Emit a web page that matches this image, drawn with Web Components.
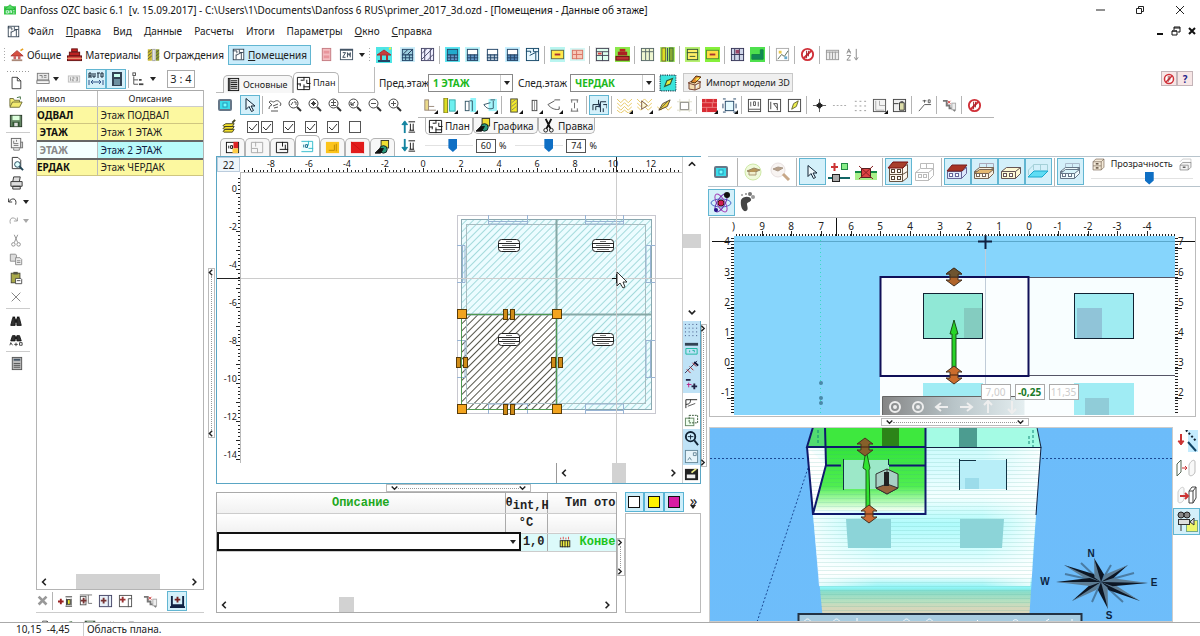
<!DOCTYPE html>
<html lang="ru">
<head>
<meta charset="utf-8">
<title>Danfoss OZC basic 6.1</title>
<style>
html,body{margin:0;height:100%;background:#fff}
body{font:10px/14px "Noto Sans","Open Sans",sans-serif;color:#222;overflow:hidden}
</style>
</head>
<body>
<app-shell></app-shell>
<script>
const BASE='*{box-sizing:border-box}button,input,select{font:inherit;color:inherit;margin:0}';
function define(name,css,html){
  customElements.define(name,class extends HTMLElement{
    constructor(){super();this.attachShadow({mode:'open'});}
    connectedCallback(){
      if(this.shadowRoot.childNodes.length)return;
      const w=this.getAttribute('w'),h=this.getAttribute('h');
      if(w)this.style.setProperty('--w',w+'px');
      if(h)this.style.setProperty('--h',h+'px');
      const t=document.createElement('template');
      t.innerHTML='<style>'+BASE+css+'</style>'+(typeof html==='function'?html(this):html);
      this.shadowRoot.append(t.content.cloneNode(true));
    }
  });
}
/* ---------- icons, 16x16 grid ---------- */
const r=(x,y,w,h,f,s)=>`<rect x="${x}" y="${y}" width="${w}" height="${h}" fill="${f||'none'}" stroke="${s||'none'}"/>`;
const p=(d,s,f,w)=>`<path d="${d}" stroke="${s||'#222'}" fill="${f||'none'}" stroke-width="${w||1}"/>`;
const lens=(inner)=>`<circle cx="6.5" cy="6.5" r="4.5" fill="#fff" stroke="#444"/>`+p('M10 10l4 4','#333','none',2)+inner;
const sheet=(bg,top,bot)=>r(0,0,16,16,bg)+r(2.5,2.5,11,6,top,'#246')+r(2.5,8.5,11,6,bot,'#246')+p('M2 11.5h12M6 8v6M10 8v6','#246');
const block=(roof,floor,wall,c)=>p('M1.5 10.5l5-4h14v6l-5 5h-14z',c,wall)+p('M1.5 10.5h14v7M15.5 10.5l5-4',c)+(roof?p('M1 10l5-6h15l-5 6z','#722',roof):'')+(floor?p('M1.5 12.5l5-4h14l-5 4z',c,floor):'')+r(3.5,12.5,3,3,'#fff',c)+r(9.5,12.5,3,3,'#fff',c);
const ban='<circle cx="8" cy="8" r="6" fill="#fff" stroke="#d03038" stroke-width="2"/>'+p('M4 12L12 4','#d03038','none',2)+p('M7 4v8M9 4v6','#a02028');
const ICONS={
 app:r(0,3,16,11,'#3cc84c')+p('M1 7l7-6 7 6z','#2a3','#5d6')+p('M3 9h3v3H3zM8 12V9h2v3M12 9h2M12 12h2','#eff'),
 rooms:r(1.5,1.5,13,13,'#fff','#234')+p('M1 3.5h5v3M9 2v3.5h5M11.5 5v9M11 6l-6 3M5 8v6','#234'),
 home:p('M1 9l7-6 7 6z','#a33','#d85040')+r(4,9,3,4,'#c66')+r(9,9,3,4,'#c66')+r(2,13,12,2,'#a87')+p('M12 3l3-2','#e6a020','none',2),
 homeC:r(0,0,16,16,'#4ee6e6')+p('M1 8l7-5 7 5z','#a33','#c83c3c')+r(4,8,2,5,'#a33')+r(10,8,2,5,'#a33')+r(2,13,12,2,'#246')+p('M13 2l2-1','#ee4','none',2),
 bricks:r(5,2,6,3,'#c22','#611')+r(2.5,5.5,11,4,'#b22','#611')+r(.5,9.5,15,5,'#c33','#611')+p('M0 12h16','#eb8'),
 walls:r(1,1,5,14,'#c9b930')+r(7,1,3,14,'#eee','#999')+r(11,1,4,14,'#8a9a30')+p('M1 5l5-4M1 9l5-4M1 13l5-4M11 5l4-3M11 9l4-3M11 13l4-3','#554'),
 door:r(3.5,1.5,9,13,'#f4bcc0','#c47a80')+r(5,4,6,3,'#e8959c')+r(5,9,6,3,'#e8959c'),
 zm:r(1.5,2.5,13,11,'#fff','#456')+r(1,2,14,2,'#456')+p('M4 6h3l-3 5h3M9 11V6l2 3 1-3v5','#345'),
 hatch1:sheet('#cdeefa','#9cd','#9cd')+p('M3 8l5-5M8 8l5-5','#235'),
 hatch2:r(1.5,1.5,13,13,'#eef','#446')+p('M2 7l5-5M2 13L13 2M8 14l6-6M5 2v12M11 2v12','#446'),
 s1:sheet('#5ee6f2','#2ac','#69c'),s2:sheet('#bdf4fa','#fff','#69c'),s3:sheet('#fff','#fff','#bcd'),s4:sheet('#c8f0ff','#fff','#58b'),
 s5:r(1.5,1.5,13,13,'#e9f8ff','#146')+p('M1 4.5h5v2M9 2v3h5M11.5 5v9M11 6l-6 3','#146'),
 y1:r(0,0,16,16,'#b9f5f0')+r(1.5,3.5,13,9,'#ffe94a','#664')+p('M5 8h6','#a33','none',2),
 y2:r(0,1,16,14,'#d5f6f4')+r(2.5,3.5,11,9,'#f7c8b8','#d87060')+p('M3 8h10M7 4v9','#d87060'),
 t1:r(0,0,16,16,'#eee')+r(1.5,1.5,13,13,'#dfe','#445')+p('M1 5h14M1 9h14M8 5v10','#445')+r(3,6,4,2,'#d44'),
 t2:r(0,0,16,16,'#8be84a')+r(5,2,6,3,'#b22')+r(3,5,10,4,'#a22')+r(1,10,14,4,'#b33','#611'),
 t3:r(1.5,1.5,13,13,'#eef6d0','#566')+p('M6 2v12M10 2v12M2 5h12','#566'),
 t4:r(0,0,16,16,'#b6f070')+r(2,1,4,14,'#dd2','#663')+r(10,1,4,14,'#8a3','#363')+p('M8 1v14','#346'),
 t5:r(0,0,16,16,'#b6f070')+r(2.5,2.5,11,11,'#fe6','#353')+p('M2 6h12M5 10h6','#353'),
 t6:r(0,0,16,16,'#86f03a')+r(1.5,3.5,13,9,'#fd4','#583')+p('M5 8h6','#a33','none',2),
 t7:r(1.5,1.5,13,13,'#cfd6e8','#335')+p('M1 8h14M5 2v12M10 2v12','#335')+r(6,3,4,4,'#946'),
 t8:r(0,0,16,16,'#4ee04e')+p('M2 13h12V3h-3v5H2z','#184','#185'),
 t9:r(1.5,1.5,13,13,'#fff','#aaa')+p('M3 13l4-5 3 2 4-6','#565')+r(4,4,3,3,'#e9c84a')+r(10,10,3,3,'#6ac'),
 ban:ban,grid:r(1.5,3.5,13,10,'#eee','#999')+p('M1 5.5h14M5 5v8M8 5v8M11 5v8','#999'),
 az:p('M2 7l2-5 2 5M3 5h3M2 9h4l-4 5h4M12 2v11M10 11l2 3 2-3','#888'),
 doc:p('M3.5 1.5h6l4 4v9h-10zM9.5 1.5v4h4','#333','#fff'),
 open:p('M1 13V4h4l1 2h6v2M1 14l3-6h11l-3 6z','#663','#f2ea70')+p('M9 3l4-1v3','#363'),
 save:r(1.5,1.5,13,13,'#686','#232')+r(4,2,8,5,'#dfd')+r(4,9,8,5,'#353')+r(6,10,4,4,'#ddd'),
 plot:r(2.5,1.5,10,10,'#f4f4f4','#666')+p('M5 4v3h5M5 9h5M8 3v2','#777')+r(12.5,5.5,2,6,'#ddd','#777')+p('M5 12v2h6v-2','#777'),
 prev:p('M3.5 1.5h6l3 3v9h-9z','#333','#fff')+'<circle cx="9" cy="9" r="3" fill="#dff" stroke="#245"/>'+p('M11 11l4 4','#245','none',2),
 print:p('M4 7l1-5h7l-1 5M2 7h12v5H2zM4 12h8v3H4z','#333','#ddd'),
 undo:p('M3 4v4h4M3 8c4-6 10-4 8 3','#222','none',1),redo:p('M13 4v4H9M13 8c-4-6-10-4-8 3','#999'),
 cut:p('M10 2L6 11M6 2l4 9','#888')+'<circle cx="5" cy="13" r="2" stroke="#888" fill="none"/><circle cx="11" cy="13" r="2" stroke="#888" fill="none"/>',
 copy:p('M1.5 2.5h6l1 1v7h-7z','#888','#ddd')+p('M7.5 6.5h5l2 2v6h-7zM9 10h4M9 12h4','#888','#eee'),
 paste:r(2.5,2.5,10,11,'#a8a848','#443')+r(5,1,5,3,'#554')+p('M7.5 8.5h6l1 1v5h-7z','#444','#fff')+p('M9 11h4','#444'),
 del:p('M3 3l10 10M13 3L3 13','#777','none',1),
 find:p('M2 13l2-8h3v8zM9 13V5h3l2 8z','#111','#333')+r(7,6,2,4,'#111')+r(4,3,3,2,'#111')+r(9,3,3,2,'#111'),
 find2:p('M2 9l2-6h3v6zM9 9V3h3l2 6z','#111','#333')+r(7,4,2,3,'#111')+p('M1 14l1-3 2 3M6 13h4M8 11v4M12 11h3v3h-3z','#333'),
 calc:r(3.5,1.5,10,13,'#bbb','#555')+r(5,3,7,2,'#456')+p('M5 8h7M5 10h7M5 12h7','#555','none',1),
 lst:r(1.5,1.5,13,11,'#e8e8e8','#777')+p('M1 9h14M4 4h3v3M9 4h3M9 6h3','#777')+r(1,10,14,3,'#fff','#777'),
 num:r(1.5,4.5,13,7,'#eee','#bbb')+p('M4 6v4M6 6h2v2H6v2h2M10 6h2v4h-2M10 8h2','#999'),
 auto:p('M1 7V2h2v5M1 5h2M5 2v4h2V2M9 2h3M10 2v5M13 2h2v4h-2z','#123')+p('M1 9v5M15 9v5M3 11h10M5 9l-2 2 2 2M11 9l2 2-2 2','#358'),
 calc2:r(4,1,10,14,'#345')+r(6,3,6,3,'#cfe')+p('M6 9h6M6 11h6M6 13h6','#ade'),
 tree:r(1,1,3,3,'#fff','#444')+p('M2 5v9h5M2 9h5','#444')+r(8,8,3,2,'#444')+r(8,13,5,2,'#444'),
 list:r(2.5,1.5,11,13,'#ddd','#111')+p('M5 4h7M5 6h7M5 8h7M5 10h7M5 12h7M4 2v12','#111'),
 plan:p('M1.5 1.5h13v13h-13z','#111','#fff')+p('M1 8.5h4M8.5 1v4M8.5 9v6M8 11.5h7M4.5 8v3M11.5 4v4h4M5 4.5h3','#111'),
 scr:'<rect x="1" y="2" width="14" height="12" rx="2" fill="#678"/><rect x="3" y="4" width="10" height="8" fill="#3bdcea"/>'+r(6,6,4,4,'#7ff','#29b'),
 ptr:p('M4 1.5v11l3-3 2.5 5 2-1-2.5-4.5h4z','#123','#eef8fc'),
 hand:p('M2 12c0-3 2-4 3-4l-3-3c2-2 3 0 5 0 2-2 5-2 7 2l-1 2M6 9l5-2M7 11l4-1M4 14h7','#555'),
 z1:lens(p('M4 8l2-3M7 5h2v3','#555')),z2:lens(p('M4 6.5h5M6.5 4v5','#333','none',1)+p('M5 5l3 3M8 5L5 8','#555')),z3:lens(p('M4 5.5h5M6.5 3v5M4 8.5h5','#555')),z4:lens(p('M4 5v3h3M4 8l4-3','#333')),z5:lens(p('M4 6.5h5','#555')),z6:lens(p('M4 6.5h5M6.5 4v5','#555')),
 w1:r(3,2,4,11,'#ead98a','#987')+p('M7 13h8M7 9h6','#987'),
 w2:r(2,0,4,16,'#dd2','#772')+r(8,2,6,12,'#6ef0f0','#3aa'),
 w3:r(9,0,6,15,'#8ff4fa')+r(3.5,3.5,4,10,'#fff','#356')+p('M8 3h3v11','#356'),
 w4:r(7,1,9,13,'#a4f4fa')+p('M2 7c3 5 7 5 10 4V3M9 2h5M9 5L2 7','#356'),
 w5:r(4,1,7,14,'#f4ea2a','#443')+p('M5 5l5-4M5 9l5-4M5 13l5-4','#886'),
 w6:r(5.5,2.5,5,11,'#fff','#444')+p('M8 3v10','#999'),w7:p('M1 7c3 4 8 6 12 5V9M8 2h6M8 3L1 7','#555'),
 w8:p('M4 2h8M5 2v3M11 2v3M4 14h8M5 11v3M11 11v3M8 5v6','#666'),
 w9:p('M1 13V7h6V2M4 13h0V9h5V4h6M9 9v6M12 7h4v4M12 11v4','#123','none',1)+r(7,6,2,4,'#235'),
 h1:p('M0 5l4 4 4-4 4 4 4-4M0 1l4 4 4-4 4 4 4-4M0 9l4 4 4-4 4 4 4-4M0 13l4 3 4-3 4 3 4-3','#e6c660','none',1),
 h2:p('M0 5l4 4 4-4 4 4 4-4M0 1l4 4 4-4 4 4 4-4M0 9l4 4 4-4 4 4 4-4','#e6c660','none',1)+p('M5 3v9l6-4z','#754','#fff8d0'),
 h3:p('M0 9l4 4 4-4 4 4 4-4','#e6c660')+p('M2 13l4-7 8-4-3 7-9 4','#543','#f0d040')+p('M4 11l8-8','#565'),
 h4:r(3.5,4.5,9,8,'#fff','#555')+p('M0 4h16M0 13h16M3 1v14M13 1v14','#ddc'),
 b1:r(0,1,16,14,'#d82c34')+p('M0 5h16M0 10h16M4 1v4M11 5v5M5 10v5M12 1v4','#ec8080'),
 b2:r(3.5,3.5,9,10,'#e6fbff','#246')+p('M1 1h3M12 1h3M1 15h3M12 15h3M1 6v5M15 6v5','#246'),
 m1:r(1.5,1.5,13,13,'#fff','#444')+p('M4 4v5M7 4h2v4H7zM12 4v5M2 12h12','#555'),
 m2:r(1.5,1.5,13,13,'#fff','#444')+p('M4 4v8M7 6h4v7M7 6l4 5','#444'),
 m3:r(1.5,1.5,13,13,'#fff','#444')+p('M5 12l2-6 5-3-2 6z','#663','#eef04a'),
 plus:p('M8 1v14M1 8h14','#555')+p('M8 5v6M5 8h6','#222','none',3),
 dash:p('M1 8h14','#aaa').replace('/>',' stroke-dasharray="2 2"/>'),
 dots:[3,8,13].map(a=>[3,8,13].map(b=>r(a,b,2,1,'#999')).join('')).join(''),
 k1:r(1.5,1.5,13,13,'#f4f4f4','#555')+p('M4 3v10h9M8 3v5h6','#aaa'),k2:r(1.5,1.5,13,13,'#eee','#444')+p('M8 5h5v8H8zM9 4h3M2 6h5','#333','#dda'),
 k3:p('M2 14l6-7h7M8 2v3M6 3h4M12 2h2v3h-2z','#555'),k4:p('M1 3h4v5h3v3h3l3 3','#777','none',2)+p('M6 3l3 3M9 3l-3 3','#c33')+r(10.5,5.5,4,7,'#eee','#aaa'),
 layers:p('M1 13l3-2h9l-2 3H2zM1 10l3-2h9l-2 3H2zM1 7l3-2h9l-2 3H2z','#442','#f4e02a')+p('M11 4l3-3','#442','none',2),
 up:p('M4 15V3','#1484a0','none',2)+p('M1 6l3-4 3 4z','#1484a0','#1484a0')+p('M8 3h7M8 14h7M10 5v7M13 5v7M9 12h5','#111','#ec8'),
 down:p('M4 1v11','#1484a0','none',2)+p('M1 10l3 4 3-4z','#1484a0','#1484a0')+p('M8 3h7M8 14h7M10 5v7M13 5v7M9 12h5','#111','#ec8'),
 gfx:r(6.5,.5,8,8,'#eede30','#332')+'<circle cx="9" cy="10" r="4" fill="#2a9a7c" stroke="#122"/>'+p('M0 14l5-5h4l-3 5z','#111','#111'),
 sc:p('M5 1l5 10M11 1L6 11','#111','none',2)+'<circle cx="5" cy="13" r="2" fill="none" stroke="#111"/><circle cx="11" cy="13" r="2" fill="none" stroke="#111"/>',
 p1:r(1.5,2.5,13,11,'#fff','#111')+r(9,2,5,7,'#d22')+r(8,9,6,5,'#fc4')+p('M4 6v3M6 6h2v3H6z','#111'),
 p2:p('M1.5 2.5h12v11h-12zM6 2v5M2 9h6v5','#aaa'),p3:p('M1.5 2.5h12v11h-12zM8 2v5M5 10h9M11 5v5','#111','none',1),
 p4:p('M1.5 2.5h12v11h-12M9 2v5M9 10h5','#3bc','#eff')+p('M4 6v3M6 6h2v3H6z','#168'),
 p5:r(1,2,14,12,'#fcc41c')+p('M4 11h6V5M12 4v8','#b80'),p6:r(1,2,14,12,'#e21c1c')+p('M1 2l14 12','#c11'),
 imp:p('M1 8l6-3 7 2-6 3zM2 9v5l6 1v-5M8 15l5-2V8','#743','#f4dcb0')+p('M4 7l5-6 5 1-6 6z','#531','#e08a30')+p('M9 5l3-2','#f8ea50','none',2),
 pat:r(1,1,14,14,'#3ae4dc','#134').replace('/>',' stroke-dasharray="1 1" stroke-width="1"/>')+p('M5 11l2-5 5-2-2 5z','#353','#e8ee40'),
 help:'<text x="8" y="13" text-anchor="middle" font-size="13" font-weight="700" fill="#22228a" font-family="Noto Sans">?</text>',
 x2:p('M3 3l9 9M12 3l-9 9','#999','none',3),
 f1:p('M0 8h6M3 5v6','#922','none',2)+p('M8 3h7M8 13h7M9 5v7M14 5v7','#333','#ee5')+r(10,6,3,5,'#ee3','#333'),
 f2:r(2.5,2.5,6,9,'#fff','#555')+p('M3 7h6M6 4v6','#733','none',2)+p('M11 1v9h4M2 1h13','#777'),
 f3:r(1.5,1.5,13,12,'#e8f0f8','#446')+p('M3 7h6M6 4v6','#733','none',2)+p('M11 2v11','#446'),
 f4:r(1.5,1.5,13,12,'#fff','#555')+p('M2 6h6M5 3v6','#933','none',2)+p('M11 5v9M11 5h4','#555'),
 f5:p('M2 2v10h12V2M5 12v3M11 12v3M0 14h16','#124','none',2)+p('M5 6h6M8 3v6','#722','none',2),
 n1:[2,6,10,14].map(a=>[2,6,10,14].map(b=>r(a-1,b-1,1,1,'#347')).join('')).join(''),
 n2:r(1,2,14,3,'#345')+p('M2 8h12v6H2zM6 10v2M9 10h2v2','#1cb8a0'),
 n3:p('M1 15L14 2','#335')+p('M3 11l4 4M6 8l4 4M9 4l4 4','#a22','none',1)+p('M11 3l4 4','#113','none',2),
 n4:p('M2 3h5M8 10h6M11 7v6','#224','none',2)+p('M3 8h5M5 6v5','#b28'),n5:p('M2 14V5h12M2 10c4 0 5-2 5-5','#222','none',1)+p('M4 12l8-3','#555'),
 n6:r(1.5,5.5,9,8,'#efe','#686')+r(5.5,2.5,9,8,'none','#353').replace('/>',' stroke-dasharray="2 1"/>'),
 n7:'<circle cx="7" cy="6" r="5" fill="#cef" stroke="#123" stroke-width="2"/>'+p('M11 10l4 5','#123','none',2)+p('M4 6h6M7 4v5','#123'),
 n8:r(1.5,1.5,13,13,'#e6f4fa','#689')+p('M4 12l2-3 2 3M10 4h3v3h-3z','#689'),
 n9:r(1,2,14,12,'#222')+r(3,8,9,4,'#eee')+p('M8 6l5-4','#ee8','none',2),
 conv:p('M3 5V3M6 5V2M9 5V3M12 5V2','#d44')+r(2.5,6.5,11,7,'#ee4','#222')+p('M5 6v8M8 6v8M11 6v8','#222')
};
const BIG={
 cap:'<circle cx="11" cy="11" r="8" fill="#effada" stroke="#cfe8a8"/>'+p('M5 10l7-3 6 2-7 3z','#986','#b89858')+p('M7 11v3h7v-3','#a97','#eec'),
 zoomc:'<circle cx="9" cy="9" r="7" fill="#f8f4f2" stroke="#e8e0e0"/>'+p('M4 8l5-2 5 1-5 3z','#a98','#b8a088')+p('M14 13l6 6','#c8a888','none',3),
 add:p('M3 6h7M6.5 2v8','#c33','none',2)+r(13.5,2.5,6,6,'#8e8','#284')+p('M0 17h22','#166','none',2)+r(4.5,13.5,7,7,'#aaa','#222'),
 rem:r(0,11,22,8,'#a8f088')+p('M0 11h22','#184','none',2)+r(6.5,7.5,9,9,'#d44','#522')+p('M4 5l14 13M18 5L4 18','#822'),
 hr:p('M2.500 6.500h13v14h-13zM15.500 6.500l5-3v13l-5 4'.replace(/\.500/g,'.5'),'#654','#fdf6ec')+p('M2 13.5h13.5l5-3','#654')+p('M1 7l5-6h15l-5 6z','#711','#a8402c')+r(4.5,8.5,3,3,'#fff','#543')+r(10.5,8.5,3,3,'#fff','#543')+r(4.5,15.5,3,3,'#fff','#543')+r(10.5,15.5,3,3,'#fff','#543'),
 hg:p('M1.5 11.5l5-4h13v7l-5 5h-13zM1.5 11.5h13v8M14.5 11.5l5-4M6.5 7V2.5h13v5M12.5 2v5','#bbb','none')+r(4.5,13.5,3,3,'#fff','#bbb')+r(9.5,13.5,3,3,'#fff','#bbb'),
 h5:block('#a83424','','#dce8fc','#669'),h6:p('M6.5 7V2.5h14v5M13.5 2v5','#aab')+block('','#e4b870','#f8f0e0','#765'),h7:block('','','#fdf8d4','#655'),
 h8:p('M6.5 9V3.5h14v6M13.5 3v6M1.5 14v-5l5-5','#a4d0d8')+p('M1 16l6-6h14l-6 6z','#18a8cc','#5fdcf4'),
 h9:p('M6.5 7V2.5h14v5M13.5 2v5','#abc')+block('','#d8f4fa','#eefafc','#678'),
 cab:p('M3 7l4-4h12v12l-4 4H3z','#765','#f4ead8')+p('M3 7h12v12M15 7l4-4M3 13h12','#765')+r(7,9,4,2,'#543')+r(7,15,4,2,'#543'),
 cab2:p('M7 3h12v6M3 7l4-4','#bbb')+p('M3 12l4-4h12v7l-4 4H3zM3 12h12v7','#777','#f4f4f4')+r(7,14,4,2,'#555'),
 atom:'<ellipse cx="11" cy="12" rx="10" ry="4" fill="none" stroke="#4a6ac8"/><ellipse cx="11" cy="12" rx="10" ry="4" transform="rotate(60 11 12)" fill="none" stroke="#a238b4" stroke-width="1"/><ellipse cx="11" cy="12" rx="10" ry="4" transform="rotate(120 11 12)" fill="none" stroke="#6a2aa8"/><circle cx="11" cy="12" r="3" fill="#d21c50" stroke="#411"/><circle cx="17" cy="4" r="3" fill="#111"/><circle cx="6" cy="19" r="2" fill="#218"/>',
 foot:'<path d="M4 9c2-4 9-4 10-1s-4 3-4 5 2 6-1 7-6-4-5-11z" fill="#444"/><circle cx="5" cy="4" r="1" fill="#999"/><circle cx="9" cy="3" r="1" fill="#888"/><circle cx="13" cy="3" r="2" fill="#777"/><circle cx="16" cy="6" r="2" fill="#999"/>',
 e1:r(12,0,10,22,'#c4ecff')+p('M5 4v10','#c33','none',2)+p('M2 11l3 4 3-4z','#c33','#c33')+p('M12 12l8 9','#146','none',2)+p('M10 0l10 11','#123','none',2).replace('/>',' stroke-dasharray="2 2"/>'),
 e2:p('M13 8c2-5 6-6 6-3v10c-1 4-6 5-6 2z','#bbb','#f8f8f8')+p('M1 7l4-4v12l-4 4z','#565','#fff')+p('M6 11h5M9 9l2 2-2 2','#c33'),
 e3:p('M2 8c2-5 6-6 6-3v10c-1 4-6 5-6 2z','#ccc','#f8f8f8')+p('M13 7l3-4h4v11l-3 5h-4zM13 7h4v12M17 7l3-4','#444','#fff')+p('M4 12h8M9 9l3 3-3 3','#c33','none',2),
 cam:r(10.5,9.5,11,11,'#eef66a','#7a8')+'<circle cx="5" cy="4" r="3" fill="#888" stroke="#222"/><circle cx="11" cy="4" r="3" fill="#888" stroke="#222"/>'+r(2.5,8.5,11,5,'#ddd','#333')+p('M14 11l4-4v7zM5 14v6','#333','#ddd')
};
define('ui-icon',':host{display:inline-block;flex:none;width:var(--w,16px);height:var(--h,16px)}svg{display:block;width:100%;height:100%}',
 e=>{const n=e.getAttribute('name');return BIG[n]?`<svg viewBox="0 0 22 22" aria-hidden="true">${BIG[n]}</svg>`:`<svg viewBox="0 0 16 16" aria-hidden="true">${ICONS[n]||''}</svg>`});
define('tool-button',`:host{display:block;flex:none;width:var(--w,20px);height:var(--h,20px)}
button{position:relative;width:100%;height:100%;padding:0;border:1px solid transparent;background:none;display:flex;align-items:center;justify-content:center}
:host([pressed]) button{background:#d4f0fa;border-color:#62b6d2}
:host([menu]) button::after{content:"";position:absolute;right:0;bottom:0;border:2px solid #111;border-left-color:transparent;border-top-color:transparent}
:host([boxed]) button{border-color:#c4b4b8;background:#f7e6e6}`,
 e=>{const s=e.getAttribute('s')||16;return `<button type="button" aria-label="${e.getAttribute('icon')}"><ui-icon name="${e.getAttribute('icon')}" w="${s}" h="${s}"></ui-icon></button>`});
define('tool-sep',':host{display:flex;flex:none;justify-content:center;align-self:center;width:5px;height:18px}i{width:1px;background:#b4b4b4}','<i></i>');
define('drop-arrow',':host{display:block;flex:none;width:12px}i{display:block;width:0;margin:auto;border:3px solid transparent;border-top:4px solid #222;border-bottom:0}','<i></i>');
define('grip-handle',':host{display:block;flex:none;width:3px;height:16px;background:radial-gradient(circle,#aaa 1px,transparent 1px) 0 0/3px 3px}','');
const tools=(list,attrs='')=>list.split(' ').map(n=>{
  if(n==='|')return '<tool-sep></tool-sep>';
  const pr=n.includes('*')?' pressed':'',mn=n.includes('^')?' menu':'';
  return `<tool-button icon="${n.replace(/[*^]/g,'')}"${pr}${mn} ${attrs}></tool-button>`}).join('');
const chev={left:'M6 1L2 5l4 4',right:'M2 1l4 4-4 4',down:'M1 2l4 4 4-4',up:'M1 6l4-4 4 4'};
const chevron=d=>`<svg viewBox="0 0 10 10" aria-hidden="true"><path d="${chev[d]}" fill="none" stroke="#222" stroke-width="2"/></svg>`;
define('split-bar',`:host{display:flex;align-items:center;justify-content:center;flex:none}
button{display:flex;align-items:center;justify-content:space-between;padding:0;border:1px solid #bbb;background:#fff;width:100%;height:var(--h);flex-direction:column}
i{flex:1;border-left:1px dotted #999}svg{flex:none;width:7px;height:7px}
:host([dir=h]) button{width:var(--w);height:8px;flex-direction:row;padding:0 4px}:host([dir=h]) i{border-left:0;border-top:1px dotted #999}`,
 e=>{const c=chevron(e.getAttribute('arrow'));return `<button type="button" aria-label="splitter">${c}<i></i>${c}</button>`});
define('scroll-bar',`:host{display:flex;align-items:center;background:#fff;flex:none;height:15px}
button{border:0;background:none;padding:0;width:16px;height:16px;display:flex;align-items:center;justify-content:center;flex:none}
.t{flex:1;display:flex;align-self:stretch}.t i{background:#d2d2d2}
:host([dir=v]){flex-direction:column;width:18px;height:auto}:host([dir=v]) .t{flex-direction:column}svg{width:8px;height:8px}`,
 e=>{const v=e.getAttribute('dir')==='v',a=+e.getAttribute('at'),b=+e.getAttribute('len');
 return `<button type="button" aria-label="back">${chevron(v?'up':'left')}</button><div class="t"><span style="flex:${a}"></span><i style="flex:${b}"></i><span style="flex:${100-a-b}"></span></div><button type="button" aria-label="forward">${chevron(v?'down':'right')}</button>`});
define('value-slider',`:host{display:block;width:var(--w,50px)}
input{appearance:none;display:block;width:100%;height:16px;background:linear-gradient(#e2e2e2,#e2e2e2) 0 50%/100% 1px no-repeat}
input::-webkit-slider-thumb{appearance:none;width:9px;height:13px;background:#0f6fc4;clip-path:polygon(0 0,100% 0,100% 70%,50% 100%,0 70%)}`,
 e=>`<input type="range" min="0" max="100" value="${e.getAttribute('value')}" aria-label="${e.getAttribute('label')}">`);

/* ---------- frame ---------- */
define('title-bar',`:host{display:flex;align-items:center;height:20px;padding-left:4px;font-size:10px;color:#111}
span{margin-left:4px;flex:1;white-space:pre}button{border:0;background:none;padding:0;width:40px;height:20px}svg{display:block;margin:auto}`,
`<ui-icon name="app" w="12" h="12"></ui-icon><span>Danfoss OZC basic 6.1  [v. 15.09.2017] - C:\\Users\\1\\Documents\\Danfoss 6 RUS\\primer_2017_3d.ozd - [Помещения - Данные об этаже]</span>
<button aria-label="Свернуть"><svg width="10" height="10"><path d="M1 5h9" stroke="#222"/></svg></button>
<button aria-label="Развернуть"><svg width="10" height="10"><path d="M1.5 3.5h5v5h-5zM3.5 3V1.5h5v5H7" fill="none" stroke="#222"/></svg></button>
<button aria-label="Закрыть"><svg width="10" height="10"><path d="M1 1l8 8M9 1L1 9" stroke="#222"/></svg></button>`);
define('menu-bar',`:host{display:flex;align-items:center;height:22px;padding-left:7px}
nav{display:flex;gap:12px;margin-left:8px;flex:1}a{color:#222;text-decoration:none}
.m{border:0;background:none;padding:0;width:16px;height:16px}svg{display:block;margin:auto}`,
`<ui-icon name="rooms" w="13" h="13"></ui-icon><nav><a href="#">Файл</a><a href="#"><u>П</u>равка</a><a href="#">Вид</a><a href="#">Данные</a><a href="#">Расчеты</a><a href="#">Итоги</a><a href="#">Параметры</a><a href="#"><u>О</u>кно</a><a href="#"><u>С</u>правка</a></nav>
<button class="m" aria-label="Свернуть окно"><svg width="10" height="10"><path d="M2 8h6" stroke="#111" stroke-width="2"/></svg></button>
<button class="m" aria-label="Восстановить окно"><svg width="10" height="10"><path d="M1 5h5v4H1zM3 4V1h6v5H7M1 5h5M3 2h6" fill="none" stroke="#111"/></svg></button>
<button class="m" aria-label="Закрыть окно"><svg width="10" height="10"><path d="M2 2l6 6M8 2L2 8" stroke="#111" stroke-width="2"/></svg></button>`);
define('main-toolbar',`:host{display:flex;align-items:center;height:25px;padding-left:3px}
.b{display:flex;align-items:center;gap:3px;height:20px;padding:0 1px;border:1px solid transparent;background:none;margin-left:2px}
.sel{background:#c9ecfb;border-color:#62b6d2;padding:0 3px}`,
`<grip-handle></grip-handle><button class="b"><ui-icon name="home" w="14"></ui-icon>Общие</button><button class="b"><ui-icon name="bricks" w="15" h="15"></ui-icon>Материалы</button><button class="b"><ui-icon name="walls" w="13" h="14"></ui-icon>Ограждения</button><button class="b sel"><ui-icon name="rooms" w="13" h="13"></ui-icon><span><u>П</u>омещения</span></button>
<span style="width:5px"></span>${tools('door zm','s="15"')}<drop-arrow></drop-arrow><grip-handle></grip-handle><tool-button icon="homeC" w="26"></tool-button>${tools('hatch1 hatch2 | s1 s2 s3 s4 s5 | y1 y2 | t1 t2 | t3 t4 | t5 t6 | t7 t8 | t9 | ban | grid az','s="15"')}`);
define('edit-toolbar',`:host{display:flex;flex-direction:column;width:36px;padding:3px 0 0 6px}
.g{display:flex;flex-direction:column}.g+.g{border-top:1px solid #ccc;margin:2px 6px 0 0;padding-top:2px}.r{display:flex}
.top{width:24px;height:3px;background:radial-gradient(circle,#999 1px,transparent 1px) 0 0/3px 3px}`,
`<div class="top"></div><div class="g">${tools('doc open save','h="19" s="14"')}</div><div class="g">${tools('plot prev print','h="19" s="15"')}
<div class="r"><tool-button icon="undo" h="19" w="14" s="14"></tool-button><drop-arrow style="align-self:center"></drop-arrow></div><div class="r"><tool-button icon="redo" h="19" w="14" s="14"></tool-button><drop-arrow style="align-self:center;opacity:.4"></drop-arrow></div>${tools('cut copy paste del','h="19" s="14"')}</div><div class="g">${tools('find find2','h="19" s="14"')}</div><div class="g">${tools('calc','h="19" s="15"')}</div>`);
define('floor-list',`:host{display:flex;flex-direction:column;width:168px}
.bar{display:flex;align-items:center;height:23px}
.ratio{width:28px;height:18px;border:1px solid #aaa;text-align:center;padding:0;background:#fff;font-size:11px;margin-left:8px}
.box{flex:1;display:flex;flex-direction:column;border:1px solid #b4b4b4;border-top:0}
table{border-collapse:collapse;width:100%;table-layout:fixed}
th{font-weight:400;height:16px;padding:0;border-top:1px solid #aaa;border-bottom:1px solid #ccc;font-size:9px}th+th,td+td{border-left:1px solid #bbb}
th:first-child{text-align:left;width:60px}
td{height:17px;padding:0 3px;background:#fcf8a0;border-bottom:1px solid #cfc680;line-height:14px}td:first-child{padding:0;font-weight:700;color:#111}
tr.on td{background:#b8fafa;border-top:2px solid #666;border-bottom:2px solid #666;height:18px;color:#124}tr.on td:first-child{color:#888;background:#f4ffff}
.foot{display:flex;align-items:center;height:23px;border-bottom:1px solid #ccc}
.stub{height:9px;overflow:hidden;display:flex;padding:3px 0 0 0;gap:2px}`,
`<div class="bar"><tool-button icon="lst" w="14" s="14"></tool-button><drop-arrow></drop-arrow><tool-button icon="num" w="24" s="14"></tool-button><tool-button icon="auto" pressed></tool-button><tool-button icon="calc2" pressed></tool-button><tool-sep></tool-sep><tool-button icon="tree" w="16" s="14"></tool-button><drop-arrow></drop-arrow><input class="ratio" value="3 : 4" aria-label="Масштаб"></div>
<div class="box"><table><thead><tr><th>имвол</th><th>Описание</th></tr></thead><tbody><tr><td>ОДВАЛ</td><td>Этаж ПОДВАЛ</td></tr><tr><td>&nbsp;ЭТАЖ</td><td>Этаж 1 ЭТАЖ</td></tr><tr class="on"><td>&nbsp;ЭТАЖ</td><td>Этаж 2 ЭТАЖ</td></tr><tr><td>ЕРДАК</td><td>Этаж ЧЕРДАК</td></tr></tbody></table><span style="flex:1"></span><scroll-bar at="17" len="63"></scroll-bar></div>
<div class="foot"><tool-button icon="x2" w="14" s="14"></tool-button><tool-sep></tool-sep>${tools('f1 f2 f3 f4','s="15"')}<span style="width:5px"></span>${tools('k4','s="15"')}<span style="width:7px"></span>${tools('f5*','s="15"')}</div>
<div class="stub">${tools('doc open save cut copy redo','s="12"')}</div>`);

/* ---------- plan toolbars ---------- */
define('page-tab',`:host{display:block;flex:none}
button{display:flex;align-items:center;gap:2px;height:var(--h,18px);width:var(--w,auto);padding:0 2px;border:1px solid #b4b4b4;border-bottom:0;border-radius:5px 5px 0 0;background:#f7f7f7;white-space:nowrap;font-size:9px}
:host([mini]) button{padding:0 4px}
:host([on]) button{background:#fff}:host([low]) button{border:1px solid #b4b4b4;border-top:0;border-radius:0 0 5px 5px;font-size:10px}`,
 e=>`<button type="button" aria-label="${e.getAttribute('icon')}"><ui-icon name="${e.getAttribute('icon')}" w="15" h="15"></ui-icon><slot></slot></button>`);
define('plan-toolbars',`:host{display:block}
.a{display:flex;align-items:flex-end;height:26px}
.fill{border-bottom:1px solid #bbb;align-self:flex-end}
form{display:flex;align-items:center;align-self:stretch;padding-top:5px;border-left:1px solid #bbb;padding-left:4px;flex:1;margin:0}
form>label{width:49px;white-space:nowrap}
.sel{position:relative;width:85px;height:18px;display:block}
select{appearance:none;width:85px;height:18px;border:1px solid #888;padding:0 4px;background:#fff;font-weight:700;color:#1cb81c;line-height:14px}
.sel drop-arrow{position:absolute;right:1px;top:1px;height:16px;padding-top:6px;border-left:1px solid #ccc;pointer-events:none}
.imp{display:flex;align-items:center;gap:3px;height:19px;width:110px;padding:0 3px;border:1px solid #c8c8c8;background:#efefef;font-size:9px;white-space:nowrap;margin-left:5px}
.help{display:flex;margin:0 7px 8px auto}
.b{display:flex;align-items:center;height:24px}
.line{height:1px;background:#b4b4b4;margin-left:202px;width:576px}
.cd{display:grid;grid-template-columns:185px 18px auto;grid-template-rows:17px 21px;align-items:center;justify-content:start}
.chk{display:flex;align-items:center;gap:10px;padding-left:6px}.pair{display:flex;gap:2px}
input[type=checkbox]{appearance:none;width:12px;height:12px;border:1px solid #555;background:#fff}
input:checked{background-image:url('data:image/svg+xml,<svg xmlns="http://www.w3.org/2000/svg" viewBox="0 0 10 10"><path d="M1 5l3 3 5-6" fill="none" stroke="%23333"/></svg>')}
.tabs{display:flex;align-items:flex-end;align-self:end;padding-left:4px}
.low{display:flex;padding-left:6px;align-self:start}
.sl{display:flex;align-items:center;padding-left:6px;font-size:9px}.num{width:20px;height:14px;border:1px solid #555;padding:0;text-align:center;background:#fff;margin:0 3px}`,
`<div class="a"><span class="fill" style="width:7px"></span><page-tab icon="list" h="18" w="70">Основные</page-tab><page-tab icon="plan" on h="21" w="46">План</page-tab><span class="fill" style="width:35px"></span>
<form><label for="pf">Пред.этаж</label><span class="sel"><select id="pf"><option>1 ЭТАЖ</option></select><drop-arrow></drop-arrow></span><span style="width:5px"></span><label for="nf" style="width:52px">След.этаж</label><span class="sel"><select id="nf"><option>ЧЕРДАК</option></select><drop-arrow></drop-arrow></span><span style="width:3px"></span><tool-button icon="pat" s="18"></tool-button><button type="button" class="imp"><ui-icon name="imp" w="16"></ui-icon>Импорт модели 3D</button>
<span class="help"><tool-button icon="ban" boxed w="16" h="15" s="12"></tool-button><tool-button icon="help" boxed w="16" h="15" s="12"></tool-button></span></form></div>
<div class="b"><tool-button icon="scr" w="18"></tool-button><span style="width:6px"></span>${tools('ptr*')}${tools('| hand z1 z2 z3 z4 z5 z6','s="16"')}<span style="width:14px"></span>${tools('w1^ w2^ w3^ w4^ | w5^ w6^ w7^ w8 | w9* | h1^ h2^ h3 h4 | b1^ b2^ | m1 m2 m3 | plus dash dots k1^ k2 | k3 | k4 | ban','s="15"')}</div>
<div class="line"></div>
<div class="cd"><div class="chk"><ui-icon name="layers" w="15" h="15"></ui-icon><span class="pair"><input type="checkbox" checked aria-label="Слой 1"><input type="checkbox" checked aria-label="Слой 2"></span><input type="checkbox" checked aria-label="Слой 3"><input type="checkbox" checked aria-label="Слой 4"><input type="checkbox" checked aria-label="Слой 5"><input type="checkbox" aria-label="Слой 6"></div>
<ui-icon name="up" w="15" h="15"></ui-icon><div class="low"><page-tab icon="plan" low on h="17" w="48">План</page-tab><page-tab icon="gfx" low h="16" w="65">Графика</page-tab><page-tab icon="sc" low h="16" w="57">Правка</page-tab></div>
<div class="tabs">${['p1','p2','p3','p4','p5','p6','gfx'].map(n=>`<page-tab mini icon="${n}" w="25" h="${n==='p4'?21:18}"${n==='p4'?' on':''}></page-tab>`).join('')}</div>
<ui-icon name="down" w="15" h="15"></ui-icon><div class="sl"><value-slider value="60" w="48" label="Яркость"></value-slider><input class="num" value="60" aria-label="Процент 1">%<span style="width:9px"></span><value-slider value="74" w="48" label="Контраст"></value-slider><input class="num" value="74" aria-label="Процент 2">%</div></div>`);

/* ---------- plan drawing ---------- */
function ticks(axis,o,unit,step,from,to,base,len){
  let d='';
  for(let i=Math.ceil(from/step);i*step<=to;i++){
    const u=i*step,whole=Math.abs(u-Math.round(u))<.01;
    const l=len*(whole?2:1),c=Math.round(o+unit*u)+.5;
    d+=axis==='x'?`M${c} ${base}v${-l}`:`M${base} ${c}h${-l}`;
  }
  return `<path d="${d}" stroke="#222" fill="none"/>`;
}
function planSvg(){
  let t='';
  for(let u=-8;u<=12;u+=2)t+=`<text x="${Math.round(423+19*u)}" y="167" text-anchor="middle">${u}</text>`;
  for(let u=0;u>=-14;u-=2)t+=`<text x="237" y="${Math.round(193-19*u)-1}" text-anchor="end">${u}</text>`;
  const lab=(x,y)=>`<g stroke="#222" fill="#fff"><rect x="${x}.5" y="${y}.5" width="21" height="12" rx="3"/><path d="M${x} ${y+4}.5h22M${x} ${y+8}.5h22"/><path d="M${x+8} ${y+2}.5h6M${x+4} ${y+6}.5h14M${x+5} ${y+10}.5h12" stroke="#777"/></g>`;
  const win='M488.5 215v9h39v-9M488 221.5h39M585.5 215v9h38v-9M585 221.5h38M488.5 414v-10h39v10M585.5 414v-10h38v10M585 410.5h38M457 245.5h8v37h-8M462.5 245v38M457 340.5h8v37h-8M655 245.5h-9v37h9M650.5 245v38M655 340.5h-9v37h9M650.5 340v38';
  const sq=(x,y)=>`<rect x="${x-4}.5" y="${y-5}.5" width="9" height="9"/>`;
  const bars=(x,y)=>`<rect x="${x-5}.5" y="${y-5}.5" width="4" height="10"/><rect x="${x+2}.5" y="${y-5}.5" width="4" height="10"/>`;
  return `<svg width="100%" height="100%" font-size="9"><defs>
<pattern id="a" width="5" height="5" patternUnits="userSpaceOnUse" patternTransform="rotate(45)"><path d="M.5 0v5" stroke="#a4dadc"/></pattern>
<pattern id="b" width="5" height="5" patternUnits="userSpaceOnUse" patternTransform="rotate(45)"><path d="M.5 0v5" stroke="#55554a"/></pattern></defs>
<g transform="translate(-217 -157)"><rect x="457.5" y="215.5" width="198" height="198" stroke="#c8c8d0" fill="none"/>
<rect x="461" y="219" width="190" height="190" fill="#ecfcff"/><rect x="461" y="219" width="190" height="190" fill="url(#a)"/>
<path d="M461.5 314.5h95v95h-95z" fill="#fff"/><path d="M461.5 314.5h95v95h-95z" fill="url(#b)"/>
<g fill="none" stroke="#8aa8b0"><rect x="461.5" y="219.5" width="190" height="190"/><rect x="466.5" y="224.5" width="179" height="179" stroke="#a8bcc0"/></g>
<path d="M556.5 219v190M461 314.5h190" stroke="#86a8a6" stroke-width="2"/><path d="${win}" fill="none" stroke="#98b4d4"/>
<path d="M461.5 314v95.5h95v-95h-95" fill="none" stroke="#4e9a50"/>
<path d="M240 278.5h442M616.5 172v291" stroke="#ccc"/><path d="M217 278.5h23M616.5 157v15" stroke="#222"/>
${lab(498,239)}${lab(592,239)}${lab(498,333)}${lab(592,333)}
<g fill="#f2a41e" stroke="#5a3c08">${sq(461,314)}${sq(556,314)}${sq(461,409)}${sq(556,409)}<g fill="#d08c18">${bars(508,314)}${bars(508,409)}${bars(461,362)}${bars(556,362)}</g></g>
<path d="M612 278.5h9M616.5 274v9" stroke="#111"/><path d="M617 272v14l3-3 3 5 2-1-2-5h4z" fill="#fff" stroke="#333"/>
<path d="M240.5 172v291M240 172.5h442M217 463.5h466" stroke="#bbb"/>
${ticks('x',423,19,.2,-9.6,13.6,172,2)}${ticks('y',193,19,.2,-.9,14.2,240,2)}
<g fill="#222">${t}</g></g></svg>`;
}
define('plan-view',`:host{display:flex;flex:1;min-height:0;border:1px solid #5aa6c4;background:#fff}
.l{flex:1;display:flex;flex-direction:column;min-width:0}.c{flex:1;position:relative;min-height:0;overflow:hidden}svg{display:block;position:absolute;inset:0}
.n{position:absolute;left:0;top:0;width:23px;height:15px;border:1px solid #bcd;background:#eef6fb;text-align:center;padding:0;line-height:12px}
.h{display:flex;justify-content:flex-end;height:20px;align-items:center}.h scroll-bar{width:126px;border-left:1px solid #999;height:20px}
.r{width:18px;display:flex;flex-direction:column;border-left:1px solid #ccc}.r scroll-bar{flex:1}
.v{display:flex;flex-direction:column}.v tool-button{background:#bfe2f6}.v .p{background:#fff}`,
()=>`<div class="l"><div class="c">${planSvg()}<button class="n">22</button></div><div class="h"><scroll-bar at="43" len="15"></scroll-bar></div></div>
<div class="r"><scroll-bar dir="v" at="46" len="11"></scroll-bar><div class="v">${['n1','n2','n3','n4','n5','n6','n7','n8','n9'].map(n=>`<tool-button icon="${n}" w="17" h="18" s="15"${/5|6|9/.test(n)?' class="p"':''}></tool-button>`).join('')}</div></div>`);
define('room-table',`:host{display:flex;height:130px;flex:none}
.g{position:relative;flex:1;min-width:0;display:flex;flex-direction:column;border:1px solid #aaa;height:121px;overflow:hidden}
table{border-collapse:collapse;table-layout:fixed;width:100%;font:700 12px/14px "Liberation Mono",monospace;flex:none}
th,td{height:20px;padding:0;border-right:1px solid #aaa;border-bottom:1px solid #ccc;white-space:nowrap;font-weight:700}thead th{background:linear-gradient(#fff,#f1f1f1)}
th:last-child,td:last-child{border-right:0;text-align:right}
.d{color:#1ea81e}sub{font-size:12px;vertical-align:-3px;line-height:0}
td{height:18px;background:#dcfafa}td.v{text-align:right;padding-right:2px}td.k{color:#1cc41c}.k span{display:flex;align-items:center;justify-content:space-between;padding-left:10px}
.e{position:absolute;left:0;top:39px;width:304px;height:19px}.e select{appearance:none;display:block;width:100%;height:100%;border:2px solid #111;background:#fff}.e drop-arrow{position:absolute;right:2px;top:8px}
.r{width:76px;display:flex;flex-direction:column;height:121px}.t{display:flex;height:20px}.t button{width:20px;height:20px;padding:2px;border:1px solid #5ab4d4;background:#cdeefa}.t i{display:block;width:12px;height:12px;border:1px solid #111;margin:auto}
.t .m{margin-left:3px;border:0;background:none;padding:0;width:14px;font-size:15px;line-height:10px}.bx{flex:1;border:1px solid #bbb;margin-top:1px}`,
`<div class="g"><table><colgroup><col style="width:288px"><col style="width:42px"><col></colgroup><thead><tr><th class="d">Описание</th><th>θ<sub>int,H</sub></th><th>Тип ото</th></tr><tr><th></th><th>°C</th><th></th></tr></thead><tbody><tr><td></td><td class="v">1,0</td><td class="k"><span><ui-icon name="conv" w="14" h="14"></ui-icon>Конве</span></td></tr></tbody></table>
<label class="e"><select aria-label="Описание помещения"><option></option></select><drop-arrow></drop-arrow></label><span style="flex:1"></span><scroll-bar at="29" len="4"></scroll-bar></div>
<split-bar arrow="right" h="38" style="width:8px"></split-bar>
<div class="r"><div class="t"><button aria-label="Белый"><i style="background:#fff"></i></button><button aria-label="Желтый"><i style="background:#fff200"></i></button><button aria-label="Пурпурный"><i style="background:#d81ca4"></i></button><button class="m" aria-label="Ещё">»<drop-arrow></drop-arrow></button></div><div class="bx"></div></div>`);

/* ---------- right side ---------- */
define('view-toolbar',`:host{display:block;height:61px}
.a{display:flex;align-items:center;height:31px;border:1px solid #b8c4cc;border-width:1px 0}.b{display:flex;align-items:center;height:30px}
.t{margin-left:7px;flex:1;margin-right:7px}.t div{display:flex;align-items:center;justify-content:space-between;font-size:9px;height:14px}.t value-slider{--w:100%;margin-top:-1px}tool-sep{height:28px}`,
`<div class="a"><tool-button icon="scr" w="27" h="27"></tool-button><tool-sep></tool-sep>${tools('cap zoomc | ptr* add rem | hr* hg | h5* h6* h7* h8* | h9*','w="27" h="27" s="22"').replace('icon="ptr" pressed w="27" h="27" s="22"','icon="ptr" pressed w="27" h="27" s="16"')}
<div class="t"><div><ui-icon name="cab" w="15" h="15"></ui-icon><label>Прозрачность</label><ui-icon name="cab2" w="15" h="15"></ui-icon></div><value-slider value="58" label="Прозрачность"></value-slider></div></div>
<div class="b">${tools('atom* foot','w="27" h="27" s="22"')}</div>`);
function grip(x,y,c){return `<path d="M${x} ${y-9}l8 6h-4v6h4l-8 6-8-6h4v-6h-4z" fill="${c}" stroke="#432"/><path d="M${x-4} ${y}h8" stroke="#421"/>`}
function frontSvg(){
  const X=u=>1028.5-29.65*u;let t='';
  for(let u=9;u>=-4;u--)t+=`<text x="${Math.round(X(u))}" y="230" text-anchor="middle">${u}</text>`;
  for(let i=0;i<6;i++)t+=`<text x="730" y="${245+30*i+(i>0?1:0)}" text-anchor="end">${4-i}</text><text x="1178" y="${245+30*i+(i>0?1:0)}">${7-i}</text>`;
  let hb='',vb='';
  for(let x=736;x<1175;x+=3)hb+=`M${x}.5 236v-2`;
  for(let y=238;y<415;y+=3)vb+=`M734 ${y}.5h-3M1175 ${y}.5h3`;
  for(let u=9;u>=-4;u--)hb+=`M${Math.round(X(u))}.5 236v-5`;
  for(let i=0;i<6;i++)vb+=`M734 ${248+30*i}.5h-7M1175 ${248+30*i}.5h7`;
  return `<svg width="100%" height="100%" font-size="10"><defs><linearGradient id="g" x1="0" x2="1" y1="0" y2="0"><stop offset="0" stop-color="#858585"/><stop offset=".5" stop-color="#b8c4c8"/><stop offset="1" stop-color="#e4eef0"/></linearGradient></defs><g transform="translate(-710 -218)">
<rect x="734" y="236" width="441" height="179" fill="#86d5fc"/><rect x="880" y="277" width="295" height="138" fill="#fafeff"/><rect x="1029" y="277" width="146" height="98" fill="#f8feff"/>
<path d="M820.5 236v179" stroke="#3cd8c4" stroke-dasharray="1 3"/><circle cx="821" cy="383" r="2" fill="#4a88a8"/><circle cx="821" cy="398" r="2" fill="#4a88a8"/><circle cx="821" cy="403" r="2" fill="#4a88a8"/>
<path d="M734 241.5h441" stroke="#5aa8cc"/><path d="M1029 277.5h146M1029 375.5h146" stroke="#556"/>
<g stroke="#123"><rect x="923.5" y="293.5" width="59" height="45" fill="#90e8d6"/><rect x="1074.5" y="293.5" width="59" height="45" fill="#a0ecf2"/></g>
<rect x="964" y="308" width="18" height="30" fill="#84ccc0"/><rect x="1077" y="308" width="25" height="30" fill="#90c4d8"/>
<rect x="923" y="383" width="60" height="32" fill="#a0ecf4"/><rect x="1074" y="383" width="60" height="32" fill="#a0ecf4"/><rect x="1085" y="398" width="24" height="17" fill="#90ccd8"/>
<path d="M985.5 236v179" stroke="#c0ccd8"/><rect x="880.5" y="277" width="148" height="99" fill="none" stroke="#101058" stroke-width="2"/>
<path d="M952 368v-34h-2l4-14 4 14h-2v34z" fill="#28d428" stroke="#185018"/>${grip(954,277,'#b0642a')}<path d="M954 268l8 6h-4v3h-8v-3h-4z" fill="#6e5430" stroke="#432"/>${grip(954,375,'#cc6c2c')}
<path d="M882.5 415V396.5h142V415z" fill="url(#g)"/><path d="M882.5 415V396.5h142" fill="none" stroke="#666"/>
<g stroke="#eee" stroke-width="2" fill="none"><circle cx="895" cy="407" r="5"/><circle cx="895" cy="407" r="1"/><circle cx="918" cy="407" r="5"/><circle cx="918" cy="407" r="1"/><path d="M936 407h12M941 403l-5 4 5 4M960 407h12M967 403l5 4-5 4M988 413v-11M984 405l4-4 4 4M1012 401v11M1008 409l4 4 4-4"/></g>
<path d="M978 241.5h14M985.5 235v14" stroke="#102040" stroke-width="2"/><path d="M712 241.5h22M1175 241.5h20M836.5 218v18" stroke="#111"/>
<path d="${hb}${vb}" stroke="#222"/><g fill="#222">${t}<text x="732" y="230">)</text></g></g></svg>`;
}
define('front-view',`:host{display:block;position:relative;flex:1 1 200px;min-height:0;margin:0 4px 0 1px;border:1px solid #bbb;overflow:hidden}svg{position:absolute;inset:0}
.v{position:absolute;left:271px;top:166px;display:flex;gap:4px}input{width:30px;height:16px;border:1px solid #aaa;padding:0;text-align:center;background:#fff;color:#ccc;line-height:14px}.k{color:#1a7a2a;font-weight:700}`,
()=>frontSvg()+'<div class="v"><input value="7,00" aria-label="X"><input class="k" value="-0,25" aria-label="Y"><input value="11,35" aria-label="Z"></div>');
function modelSvg(){
  const star=(x,y,w)=>{const cx=1101,cy=582,dx=x-cx,dy=y-cy,l=Math.hypot(dx,dy),nx=-dy/l*w,ny=dx/l*w,mx=cx+dx*.25,my=cy+dy*.25;
   return `<path d="M${cx} ${cy}L${mx+nx} ${my+ny}L${x} ${y}L${mx-nx*.4} ${my-ny*.4}z" fill="#0c1624"/><path d="M${cx} ${cy}L${mx-nx} ${my-ny}L${x} ${y}z" fill="#5c7c94"/>`};
  let lines='';for(let y=450;y<612;y+=4)lines+=`M${Math.round(807+(y-447)*.09)} ${y}.5H${Math.round(1041-(y-447)*.07)}`;
  return `<svg width="100%" height="100%"><defs><linearGradient id="s" x1="0" x2="0" y1="0" y2="1"><stop offset="0" stop-color="#c8fcfa"/><stop offset=".22" stop-color="#d8fcff"/><stop offset=".36" stop-color="#f4ffff"/><stop offset=".5" stop-color="#b0fbfc"/><stop offset=".66" stop-color="#d8feff"/><stop offset=".76" stop-color="#fff"/><stop offset=".83" stop-color="#8cf4f6"/><stop offset=".85" stop-color="#8adcc8"/><stop offset=".9" stop-color="#b8e0c0"/><stop offset=".93" stop-color="#d4d8bc"/><stop offset="1" stop-color="#e0d4bc"/></linearGradient>
<linearGradient id="k" x1="0" x2="0" y1="0" y2="1"><stop offset="0" stop-color="#6cbcfa"/><stop offset="1" stop-color="#78c4fc"/></linearGradient>
<linearGradient id="gr" x1="0" x2="0" y1="0" y2="1"><stop offset="0" stop-color="#34e43c"/><stop offset=".6" stop-color="#50ee50"/><stop offset=".85" stop-color="#b8fab8"/><stop offset="1" stop-color="#fff"/></linearGradient>
<linearGradient id="w" x1="0" x2="1" y1="0" y2="0"><stop offset="0" stop-color="#fff" stop-opacity=".9"/><stop offset=".3" stop-color="#fff" stop-opacity="0"/><stop offset=".75" stop-color="#fff" stop-opacity="0"/><stop offset="1" stop-color="#fff" stop-opacity=".9"/></linearGradient></defs>
<g transform="translate(-710 -428)"><rect x="709" y="427" width="2000" height="1200" fill="url(#k)"/>
<path d="M710 458.5h96M1042 458.5h131" stroke="#1c4a94" stroke-dasharray="2 2" stroke-width="1"/><path d="M808 468L757 622" stroke="#1c4a94" stroke-dasharray="2 2"/>
<path d="M812 427L807 447l6 67 10 107h206l7-107 5-67-4-20z" fill="url(#s)"/><path d="M807 447l6 67 6 72h211l6-72 5-67z" fill="url(#w)"/>
<path d="M813 427l-6 20h119v-20z" fill="#52dc70"/><path d="M825 427h101v20H825z" fill="#3ee83e"/><path d="M926 427h111l4 20H926z" fill="#a4fbe4"/>
<path d="M826 448h99v64l-112-2 13-44z" fill="url(#gr)"/><path d="M807 447l19 18-13 48z" fill="#fff"/>
<path d="${lines}" stroke="#40a898" stroke-opacity=".16"/>
<rect x="882" y="428" width="17" height="19" fill="#2c8418"/><rect x="959" y="428" width="18" height="19" fill="#4c9c90"/>
<rect x="843" y="460" width="46" height="29" fill="#9ce8c8"/><rect x="960" y="460" width="46" height="29" fill="#b8eef8"/><rect x="965" y="478" width="14" height="11" fill="#9cdcea"/>
<path d="M843.5 459v31M888.5 459v6M959.5 459v31M1006.5 459v31M960 460.5h16" stroke="#134"/>
<path d="M846 519h45v29h-43zM960 519h44l-2 29h-42z" fill="#8cd4d8"/>
<path d="M813 427l-6 20h118.5v-20M807 447l6 67h112.5v-67M825 427l1 38-13 49M826 465.5h15M889 465.5h36" fill="none" stroke="#101a6c" stroke-width="2"/><path d="M926 447.5h115l-4-20M1041 447l-5 68" fill="none" stroke="#102040" stroke-width="1"/><path d="M818 430v15M1033 430v17M1029 436v10" stroke="#187" stroke-dasharray="3 2"/>
<path d="M866 508v-38l-3-2 3-18 4 18-1 2 1 38z" fill="#30e430" stroke="#186018"/>${grip(865,447,'#86602a')}${grip(869,514,'#cc6c34')}
<path d="M876 474l11-5 11 5v14l-11 6-11-6z" fill="#a8d0c4" stroke="#333"/><path d="M887 469v15l-11 4 11 6 11-6-11-4" fill="#94643c" stroke="#333"/><path d="M884 472h5v14h-5z" fill="#222"/>
<path d="M798 622v-8h284v8z" fill="#a8cce0"/><path d="M798.5 622v-8h283v8" fill="none" stroke="#234" stroke-width="2"/><path d="M804 622c2-4 5-4 7 0M833 622c2-4 5-4 7 0M857 622v-4M903 622c2-4 5-4 7 0M926 622c2-4 5-4 7 0M976 622l2-2M1012 622c2-3 5-3 7 0M1045 622l4-3M1072 622v-3" stroke="#fff" fill="none"/>
<g stroke="#4a7ca4" stroke-width="2"><path d="M1101 582l-20-19M1101 582l10-17M1101 582l33-9M1101 582l22 20M1101 582l-9 20M1101 582l-36-8"/></g>
${star(1064,565,4)}${star(1128,565,4)}${star(1072,601,4)}${star(1140,601,4)}${star(1094,558,5)}${star(1108,609,5)}${star(1056,582,4)}${star(1148,583,4)}
<g font-size="10" font-weight="700" fill="#0c2440" font-family="Liberation Sans,sans-serif" text-anchor="middle"><text x="1091" y="557">N</text><text x="1109" y="619">S</text><text x="1045" y="585">W</text><text x="1154" y="586">E</text></g></g></svg>`;
}
define('model-view',`:host{display:flex;flex:1 1 195px;min-height:0}
.c{position:relative;flex:1;margin-left:1px;border:1px solid #ccc;overflow:hidden}svg{position:absolute;inset:0}
.t{width:27px;display:flex;flex-direction:column}`,
()=>`<div class="c">${modelSvg()}</div><div class="t">${tools('e1 e2 e3 cam*','w="27" h="27" s="22"')}</div>`);
define('status-bar',`:host{display:flex;height:14px;flex:none;border-top:1px solid #aaa;line-height:13px}
span{white-space:pre;padding-left:16px;width:84px;border-right:1px solid #ccc}b{font-weight:400;padding-left:3px}`,'<span>10,15  -4,45</span><b>Область плана.</b>');
define('app-shell',`:host{display:flex;flex-direction:column;height:100vh;min-width:1100px;background:#fff;overflow:hidden}
.w{flex:1;display:flex;min-height:0}.m{flex:1;display:flex;flex-direction:column;min-width:0}.s{flex:1;display:flex;min-height:0}
.c{flex:1 1 484px;display:flex;flex-direction:column;min-width:0}.r{flex:1 1 492px;display:flex;flex-direction:column;min-width:0}
.sp{width:12px;display:flex;padding:201px 1px 0 4px;align-items:flex-start}.sp split-bar{width:7px}
.sq{width:7px;display:flex;padding-top:168px;align-items:flex-start}.sq split-bar{width:6px}`,
`<title-bar></title-bar><menu-bar></menu-bar><main-toolbar></main-toolbar>
<div class="w"><edit-toolbar></edit-toolbar><floor-list></floor-list><div class="sp"><split-bar arrow="left" h="170"></split-bar></div>
<div class="m"><plan-toolbars></plan-toolbars><div class="s"><div class="c"><plan-view></plan-view><split-bar dir="h" arrow="down" w="145" style="height:8px"></split-bar><room-table></room-table></div>
<div class="sq"><split-bar arrow="right" h="143"></split-bar></div>
<div class="r"><view-toolbar></view-toolbar><front-view></front-view><split-bar dir="h" arrow="down" w="148" style="height:10px;margin-left:3px"></split-bar><model-view></model-view></div></div></div></div><status-bar></status-bar>`);
</script>
</body>
</html>
